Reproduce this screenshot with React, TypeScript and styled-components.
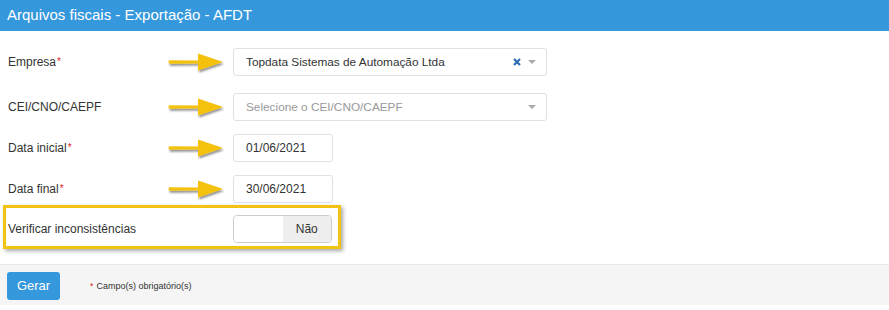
import React from "react";
import styled, { createGlobalStyle } from "styled-components";

const Global = createGlobalStyle`
  html, body { margin: 0; padding: 0; background: #fff; }
  body { font-family: "Liberation Sans", Arial, sans-serif; color: #333; }
`;

const Page = styled.div`
  width: 889px;
  height: 310px;
  display: flex;
  flex-direction: column;
  background: #fff;
`;

const Header = styled.div`
  height: 31px;
  background: #3598dc;
  color: #fff;
  font-size: 15px;
  display: flex;
  align-items: center;
  padding-left: 7px;
  padding-bottom: 2px;
  box-sizing: border-box;
`;

const Form = styled.div`
  display: flex;
  flex-direction: column;
  padding-top: 17px;
`;

const Row = styled.div<{ $mb: number }>`
  display: grid;
  grid-template-columns: 160px 65px auto;
  align-items: center;
  height: 28px;
  padding-left: 8px;
  margin-bottom: ${(p) => p.$mb}px;
`;

const Label = styled.div`
  font-size: 12px;
  color: #333;
`;

const Req = styled.span`
  color: #e02222;
  font-size: 10px;
  margin-left: 1px;
  vertical-align: 1px;
`;

const SelectBox = styled.div<{ $placeholder?: boolean }>`
  width: 314px;
  height: 28px;
  box-sizing: border-box;
  border: 1px solid #e1e1e1;
  border-radius: 3px;
  display: flex;
  align-items: center;
  padding: 0 10px 0 12px;
  font-size: 11.8px;
  color: ${(p) => (p.$placeholder ? "#999" : "#333")};
`;

const SelectText = styled.span`
  flex: 1;
`;

const Caret = styled.span`
  width: 0;
  height: 0;
  border-left: 4px solid transparent;
  border-right: 4px solid transparent;
  border-top: 4px solid #aaa;
  margin-left: 7px;
`;

const DateInput = styled.div`
  width: 100px;
  height: 28px;
  box-sizing: border-box;
  border: 1px solid #e1e1e1;
  border-radius: 3px;
  display: flex;
  align-items: center;
  padding-left: 12px;
  font-size: 12px;
  color: #333;
`;

const Highlight = styled.div`
  margin-left: 3px;
  width: 338px;
  height: 44px;
  box-sizing: border-box;
  border: 3px solid #f2c311;
  box-shadow: 2px 2px 4px rgba(0, 0, 0, 0.35);
  display: grid;
  grid-template-columns: 225px auto;
  align-items: center;
  padding: 4px 0 0 2px;
`;

const Toggle = styled.div`
  width: 99px;
  height: 28px;
  box-sizing: border-box;
  border: 1px solid #ccc;
  border-radius: 4px;
  display: flex;
  overflow: hidden;
  font-size: 12px;
`;

const ToggleHalf = styled.div<{ $off?: boolean }>`
  flex: 1;
  display: flex;
  align-items: center;
  justify-content: center;
  background: ${(p) => (p.$off ? "#eee" : "#fff")};
  color: #333;
`;

const Footer = styled.div`
  margin-top: 15px;
  height: 41px;
  background: #f5f5f5;
  border-top: 1px solid #e8e8e8;
  box-sizing: border-box;
  display: flex;
  align-items: center;
  padding-left: 7px;
  padding-top: 1px;
`;

const Button = styled.div`
  width: 53px;
  height: 28px;
  border-radius: 3px;
  background: #3598dc;
  color: #fff;
  font-size: 13px;
  display: flex;
  align-items: center;
  justify-content: center;
`;

const Note = styled.div`
  margin-left: 30px;
  font-size: 9px;
  color: #333;
`;

const NoteStar = styled.span`
  color: #e02222;
  margin-right: 3px;
`;

const Arrow = () => (
  <svg width="60" height="24" viewBox="0 0 60 24" style={{ display: "block" }}>
    <defs>
      <filter id="sh" x="-20%" y="-50%" width="140%" height="200%">
        <feGaussianBlur in="SourceAlpha" stdDeviation="1.2" />
        <feOffset dx="1" dy="2" result="b" />
        <feComponentTransfer>
          <feFuncA type="linear" slope="0.45" />
        </feComponentTransfer>
        <feMerge>
          <feMergeNode />
          <feMergeNode in="SourceGraphic" />
        </feMerge>
      </filter>
    </defs>
    <g filter="url(#sh)">
      <path d="M1 10.2 Q0 12 1 13.8 L31 13.6 L31 10.4 Z" fill="#f4c20d" />
      <path d="M30 3.5 L55 12 L30 20.5 Z" fill="#f4c20d" />
    </g>
  </svg>
);

const ClearX = () => (
  <svg width="8" height="8" viewBox="0 0 8 8" style={{ display: "block" }}>
    <path d="M1 1 L7 7 M7 1 L1 7" stroke="#2d6cb5" strokeWidth="2.2" strokeLinecap="butt" />
  </svg>
);

export default function App() {
  return (
    <Page>
      <Global />
      <Header>Arquivos fiscais - Exportação - AFDT</Header>
      <Form>
        <Row $mb={17}>
          <Label>
            Empresa<Req>*</Req>
          </Label>
          <Arrow />
          <SelectBox>
            <SelectText>Topdata Sistemas de Automação Ltda</SelectText>
            <ClearX />
            <Caret />
          </SelectBox>
        </Row>
        <Row $mb={13}>
          <Label>CEI/CNO/CAEPF</Label>
          <Arrow />
          <SelectBox $placeholder>
            <SelectText>Selecione o CEI/CNO/CAEPF</SelectText>
            <Caret />
          </SelectBox>
        </Row>
        <Row $mb={13}>
          <Label>
            Data inicial<Req>*</Req>
          </Label>
          <Arrow />
          <DateInput>01/06/2021</DateInput>
        </Row>
        <Row $mb={2}>
          <Label>
            Data final<Req>*</Req>
          </Label>
          <Arrow />
          <DateInput>30/06/2021</DateInput>
        </Row>
        <Highlight>
          <Label>Verificar inconsistências</Label>
          <Toggle>
            <ToggleHalf />
            <ToggleHalf $off>Não</ToggleHalf>
          </Toggle>
        </Highlight>
      </Form>
      <Footer>
        <Button>Gerar</Button>
        <Note>
          <NoteStar>*</NoteStar>Campo(s) obrigatório(s)
        </Note>
      </Footer>
    </Page>
  );
}
